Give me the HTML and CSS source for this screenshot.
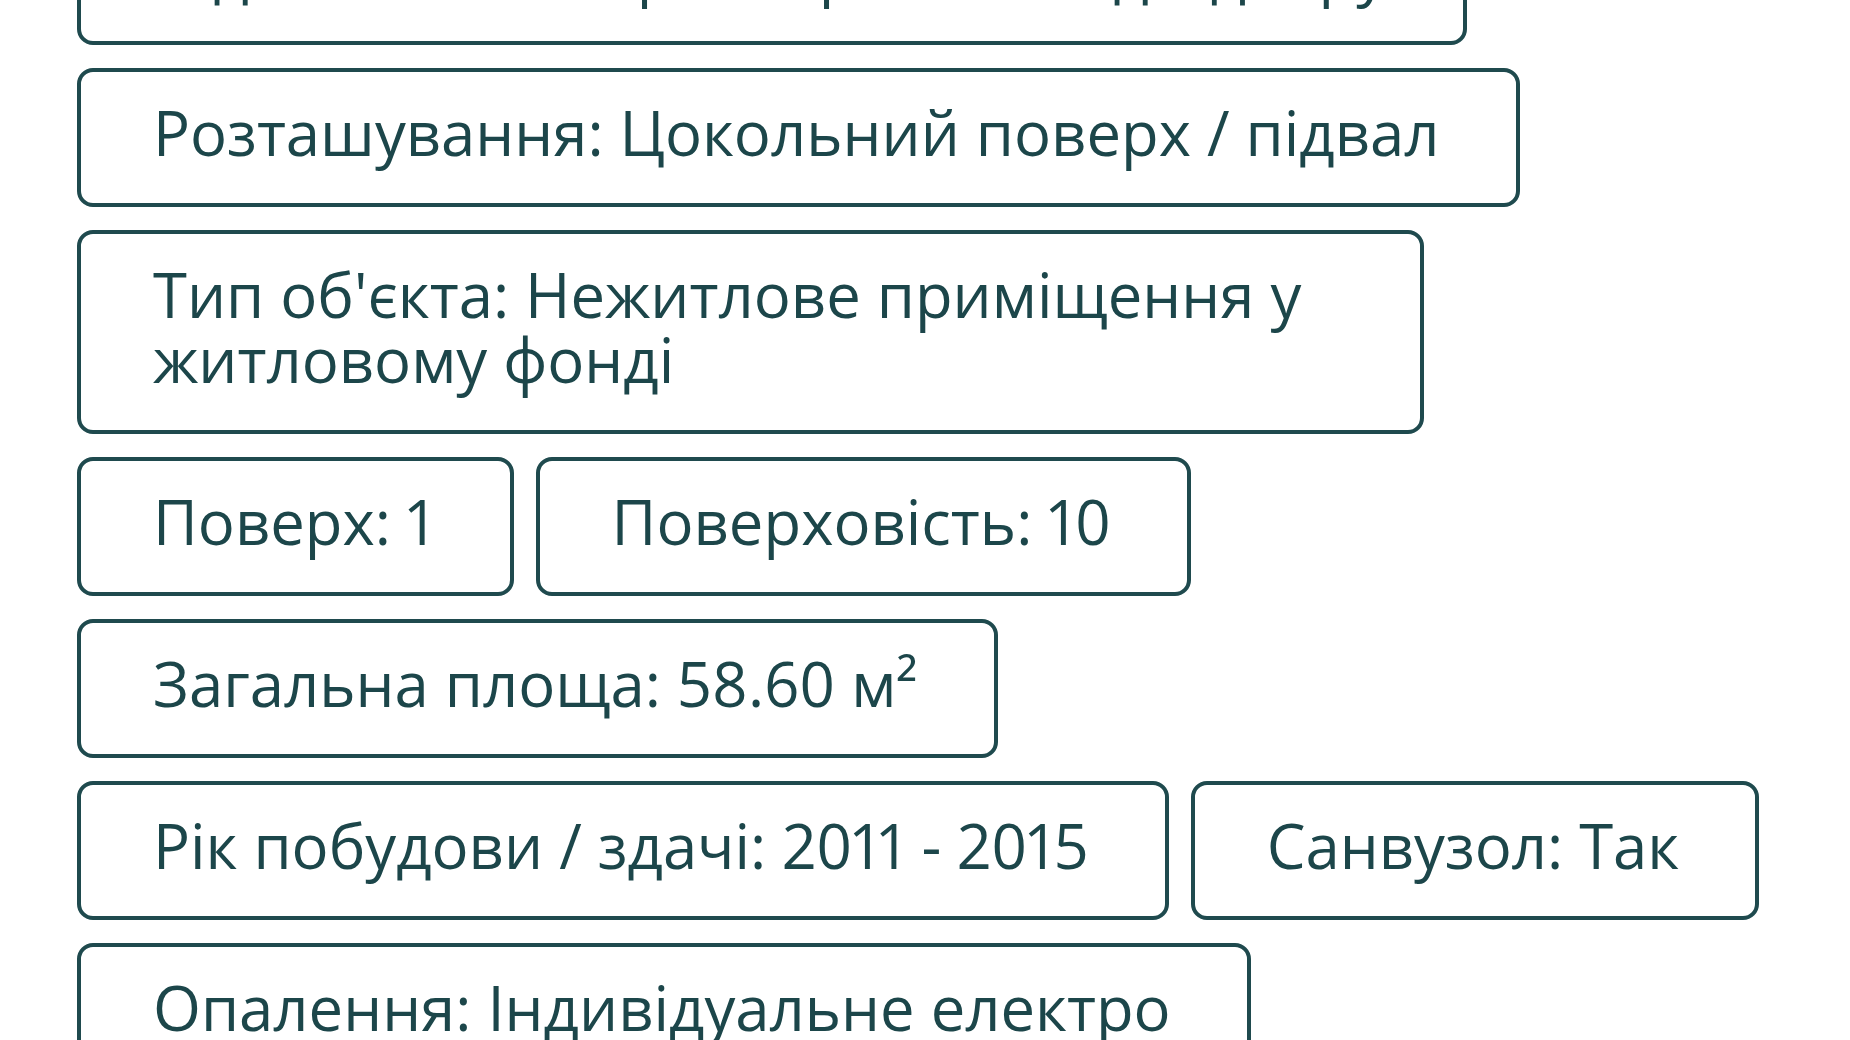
FILE: index.html
```html
<!DOCTYPE html>
<html lang="uk">
<head>
<meta charset="utf-8">
<title>Характеристики об'єкта</title>
<link rel="stylesheet" href="styles.css">
</head>
<body>
<ul class="props">
  <li class="prop">Підземний поверх: Окремий вхід з двору</li>
  <li class="prop">Розташування: Цокольний поверх / підвал</li>
  <li class="prop prop--wrap">Тип об'єкта: Нежитлове приміщення у житловому фонді</li>
  <li class="prop">Поверх: 1</li>
  <li class="prop">Поверховість: 10</li>
  <li class="prop">Загальна площа: 58.60 м²</li>
  <li class="prop">Рік побудови / здачі: 2011 - 2015</li>
  <li class="prop">Санвузол: Так</li>
  <li class="prop">Опалення: Індивідуальне електро</li>
</ul>
</body>
</html>
```

FILE: styles.css
```css
html, body {
  margin: 0;
  padding: 0;
  background: #ffffff;
}

body {
  font-family: "Open Sans", "Noto Sans", sans-serif;
  color: #1c464a;
  overflow: hidden;
}

.props {
  list-style: none;
  margin: -94px 0 0 0;
  padding: 0 40px 0 77px;
  display: flex;
  flex-wrap: wrap;
  align-items: flex-start;
  gap: 23px 22px;
}

.prop {
  box-sizing: border-box;
  border: 4px solid #1f4a4e;
  border-radius: 16px;
  padding: 28px 76px 38px 72px;
  font-size: 61.6px;
  line-height: 65px;
  font-weight: 400;
  white-space: nowrap;
  font-variant-numeric: proportional-nums;
}

.prop--wrap {
  white-space: normal;
  max-width: 1347px;
}
```
